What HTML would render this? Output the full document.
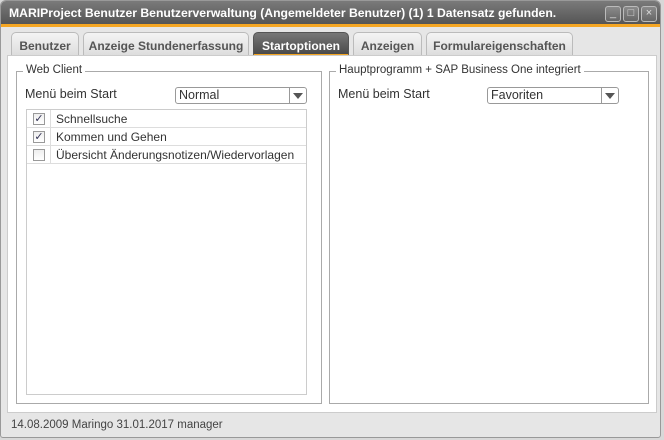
<!DOCTYPE html>
<html><head><meta charset="utf-8"><style>
*{box-sizing:border-box;margin:0;padding:0}
body{width:664px;height:440px;background:#d8d8d8;font-family:"Liberation Sans",Arial,sans-serif;font-size:12px;color:#333;position:relative;overflow:hidden}
.win{position:absolute;left:0;top:0;width:661px;height:438px;background:#e6e6e6;border:1px solid #999;border-radius:6px 6px 3px 3px;overflow:hidden}
.title{position:absolute;left:0;top:0;width:100%;background:linear-gradient(#7a7a7a,#555);color:#fff;font-weight:bold;font-size:12.2px;line-height:24px;padding-left:8px;border-bottom:3px solid #f5a623;height:26px;white-space:nowrap}
.btn{position:absolute;top:5px;width:16px;height:16px;border:1px solid #bbb;border-radius:3px;background:linear-gradient(#8a8a8a,#666);color:#ddd;font-size:11px;line-height:13px;text-align:center}
.tab{position:absolute;top:31px;height:24px;border:1px solid #bbb;border-bottom:none;border-radius:5px 5px 0 0;background:linear-gradient(#f4f4f4,#dcdcdc);font-weight:bold;color:#555;text-align:center;line-height:26px;font-size:12px;white-space:nowrap}
.tab.act{background:linear-gradient(#777,#4a4a4a);color:#fff;border-color:#555;border-bottom:2px solid #f5a623}
.panel{position:absolute;left:6px;top:54px;width:650px;height:358px;background:#fff;border:1px solid #ccc}
.fs{position:absolute;top:70px;height:333px;border:1px solid #aaa}
.leg{position:absolute;top:-8px;left:6px;background:#fff;padding:0 3px;font-size:11.5px;color:#333;white-space:nowrap}
.lbl{position:absolute;font-size:12.5px;white-space:nowrap}
.dd{position:absolute;height:17px;border:1px solid #999;border-radius:3px;background:#fff;font-size:12.5px;line-height:15px;padding-left:3px}
.dd i{position:absolute;right:0;top:0;width:17px;height:15px;border-left:1px solid #999}
.dd i:after{content:"";position:absolute;left:3px;top:5px;border-left:5px solid transparent;border-right:5px solid transparent;border-top:6px solid #555}
.grid{position:absolute;left:25px;top:108px;width:281px;height:286px;border:1px solid #ccc}
.row{height:18px;border-bottom:1px solid #ddd;position:relative;font-size:12px;line-height:19px;white-space:nowrap}
.row .c{position:absolute;left:0;top:0;width:24px;height:17px;border-right:1px solid #ddd}
.row .c b{position:absolute;left:6px;top:3px;width:12px;height:12px;border:1px solid #999;background:linear-gradient(#eee,#fff);font-weight:normal;color:#335;font-size:11px;line-height:10px;text-align:center}
.row span{position:absolute;left:29px}
</style></head><body>
<div class="win">
<div class="title">MARIProject Benutzer Benutzerverwaltung (Angemeldeter Benutzer) (1) 1 Datensatz gefunden.</div>
<div class="btn" style="left:604px">_</div><div class="btn" style="left:622px">□</div><div class="btn" style="left:640px">×</div>
<div class="tab" style="left:10px;width:68px">Benutzer</div>
<div class="tab" style="left:82px;width:166px">Anzeige Stundenerfassung</div>
<div class="tab act" style="left:252px;width:96px">Startoptionen</div>
<div class="tab" style="left:352px;width:69px">Anzeigen</div>
<div class="tab" style="left:425px;width:147px">Formulareigenschaften</div>
<div class="panel"></div>
<div class="fs" style="left:15px;width:306px"><div class="leg">Web Client</div></div>
<div class="fs" style="left:328px;width:320px"><div class="leg">Hauptprogramm + SAP Business One integriert</div></div>
<div class="lbl" style="left:24px;top:86px">Menü beim Start</div>
<div class="dd" style="left:174px;top:86px;width:132px">Normal<i></i></div>
<div class="lbl" style="left:337px;top:86px">Menü beim Start</div>
<div class="dd" style="left:486px;top:86px;width:132px">Favoriten<i></i></div>
<div class="grid">
<div class="row"><div class="c"><b>✓</b></div><span>Schnellsuche</span></div>
<div class="row"><div class="c"><b>✓</b></div><span>Kommen und Gehen</span></div>
<div class="row"><div class="c"><b></b></div><span>Übersicht Änderungsnotizen/Wiedervorlagen</span></div>
</div>
<div class="lbl" style="left:10px;top:418px;font-size:11.5px;color:#444">14.08.2009 Maringo 31.01.2017 manager</div>
</div>
</body></html>
